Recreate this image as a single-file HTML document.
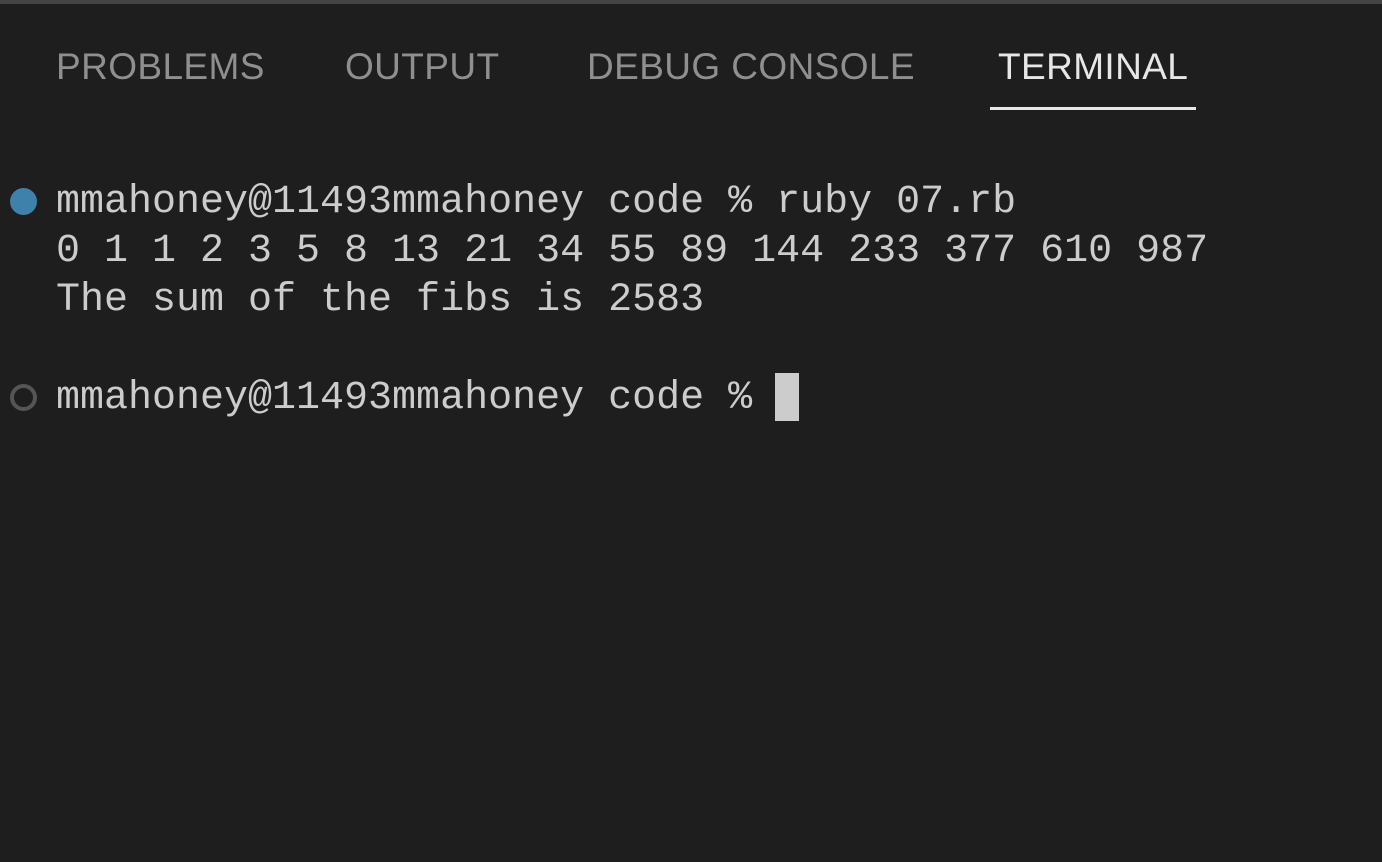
<!DOCTYPE html>
<html><head><style>
html,body{margin:0;padding:0;width:1382px;height:862px;background:#1e1e1e;overflow:hidden}
.top{position:absolute;left:0;top:0;width:1382px;height:4px;background:#444}
.tab{position:absolute;top:45px;font-family:"Liberation Sans",sans-serif;font-size:37px;letter-spacing:0.4px;color:#8f8f8f;line-height:44px;white-space:nowrap}
.ul{position:absolute;left:990px;top:107px;width:206px;height:3px;background:#e7e7e7}
.term{position:absolute;left:56px;top:178px;font-family:"Liberation Mono",monospace;font-size:40px;line-height:49px;color:#cccccc;white-space:pre}
.dot{position:absolute;left:10px;top:188px;width:27px;height:27px;border-radius:50%;background:#3e82ac}
.ring{position:absolute;left:10px;top:384px;width:19px;height:19px;border-radius:50%;border:4px solid #555}
.cur{position:absolute;left:775px;top:373px;width:24px;height:48px;background:#cccccc}
</style></head><body>
<div class="top"></div>
<div class="tab" style="left:56px">PROBLEMS</div>
<div class="tab" style="left:345px">OUTPUT</div>
<div class="tab" style="left:587px">DEBUG CONSOLE</div>
<div class="tab" style="left:998px;color:#e7e7e7">TERMINAL</div>
<div class="ul"></div>
<div class="dot"></div>
<div class="ring"></div>
<div class="term">mmahoney@11493mmahoney code % ruby 07.rb
0 1 1 2 3 5 8 13 21 34 55 89 144 233 377 610 987
The sum of the fibs is 2583

mmahoney@11493mmahoney code % </div>
<div class="cur"></div>
</body></html>
